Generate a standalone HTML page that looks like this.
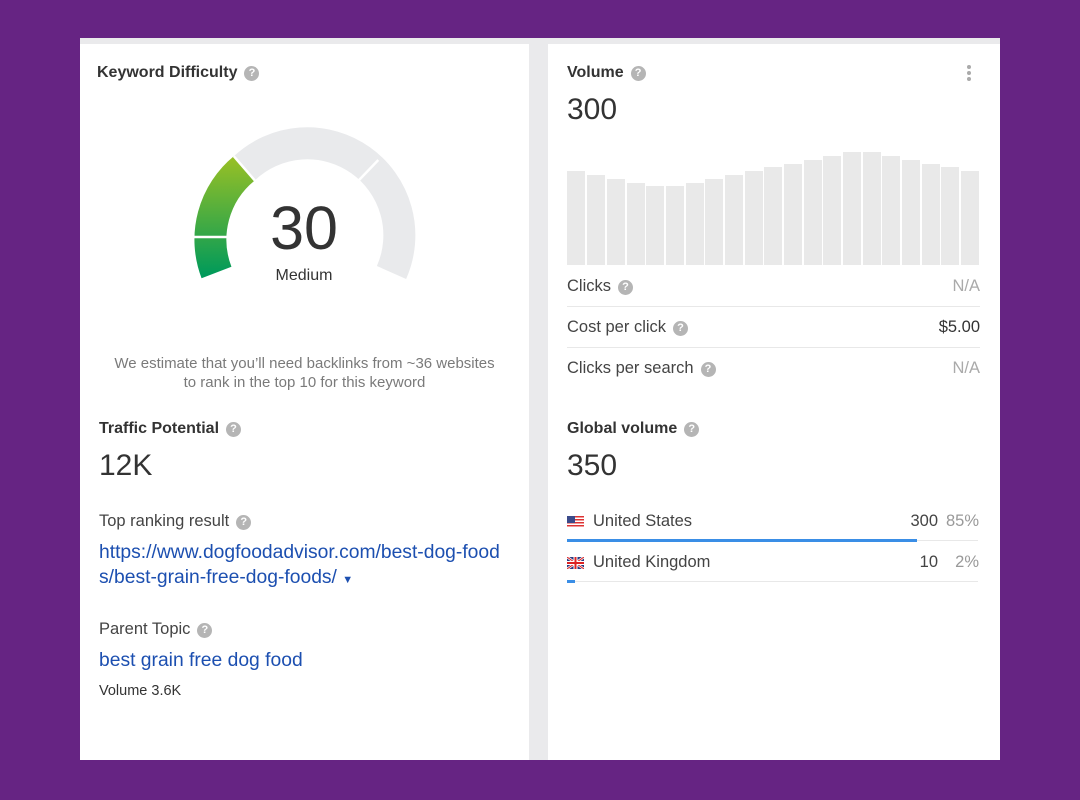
<!DOCTYPE html>
<html><head><meta charset="utf-8"><style>
*{margin:0;padding:0;box-sizing:border-box}
body{width:1080px;height:800px;background:#662483;position:relative;overflow:hidden;font-family:"Liberation Sans",Arial,sans-serif;color:#333}
.a{position:absolute;white-space:nowrap}
.q{display:inline-block;width:15px;height:15px;border-radius:50%;background:#b5b5b5;color:#fff;font-size:11px;font-weight:bold;text-align:center;line-height:15px;vertical-align:1px;margin-left:7px}
.h{font-weight:bold;font-size:16px;line-height:20px;color:#333}
.l{font-size:16.5px;line-height:20px;color:#444}
.big{font-size:30px;line-height:34px;color:#333}
.link{color:#1c4fb0;font-size:19.3px;line-height:25px}
.hr{position:absolute;height:1px;background:#e8e8e8}
</style></head><body>
<div class="a" style="left:80px;top:38px;width:920px;height:722px;background:#eaeaec"></div>
<div class="a" style="left:80px;top:44px;width:449px;height:716px;background:#fff"></div>
<div class="a" style="left:548px;top:44px;width:452px;height:716px;background:#fff"></div>

<div class="a h" style="left:97px;top:63px">Keyword Difficulty<span class="q">?</span></div>
<svg class="a" style="left:0;top:0" width="540" height="320">
<defs><linearGradient id="g" x1="0" y1="160" x2="0" y2="275" gradientUnits="userSpaceOnUse"><stop offset="0" stop-color="#95bf26"/><stop offset="1" stop-color="#009a5a"/></linearGradient></defs>
<path d="M216.5 272.5 A92 92 0 0 1 244.3 168.3" fill="none" stroke="url(#g)" stroke-width="32"/>
<path d="M244.3 168.3 A92 92 0 0 1 391.5 272.5" fill="none" stroke="#e9eaec" stroke-width="32"/>
<g stroke="#fff" stroke-width="2.5">
<line x1="228" y1="237" x2="194" y2="237"/>
<line x1="254.8" y1="180.4" x2="233.8" y2="156.2"/>
<line x1="356.1" y1="183.1" x2="378.3" y2="160"/>
</g>
<text x="304" y="249" text-anchor="middle" font-family="Liberation Sans" font-size="61" fill="#333">30</text>
<text x="304" y="280" text-anchor="middle" font-family="Liberation Sans" font-size="16" fill="#333">Medium</text>
</svg>
<div class="a" style="left:80px;top:354px;width:449px;text-align:center;font-size:15px;line-height:19px;color:#7a7a7a">We estimate that you’ll need backlinks from ~36 websites<br>to rank in the top 10 for this keyword</div>

<div class="a h" style="left:99px;top:419px">Traffic Potential<span class="q">?</span></div>
<div class="a big" style="left:99px;top:449px">12K</div>
<div class="a l" style="left:99px;top:511px">Top ranking result<span class="q">?</span></div>
<div class="a link" style="left:99px;top:540px">https://www.dogfoodadvisor.com/best-dog-food<br>s/best-grain-free-dog-foods/ <span style="font-size:11px">▼</span></div>
<div class="a l" style="left:99px;top:619px">Parent Topic<span class="q">?</span></div>
<div class="a link" style="left:99px;top:648px">best grain free dog food</div>
<div class="a" style="left:99px;top:682px;font-size:14.5px;line-height:18px;color:#333">Volume 3.6K</div>

<div class="a h" style="left:567px;top:63px">Volume<span class="q">?</span></div>
<div class="a" style="left:967px;top:65px;width:4px">
<div style="width:4px;height:4px;border-radius:50%;background:#aaa;margin-bottom:2px"></div>
<div style="width:4px;height:4px;border-radius:50%;background:#aaa;margin-bottom:2px"></div>
<div style="width:4px;height:4px;border-radius:50%;background:#aaa"></div></div>
<div class="a big" style="left:567px;top:93px">300</div>
<svg class="a" style="left:0;top:0" width="1000" height="280">
<g fill="#e9e9e9">
<rect x="567" y="171" width="18" height="94"/><rect x="587" y="175" width="18" height="90"/><rect x="607" y="179" width="18" height="86"/><rect x="627" y="183" width="18" height="82"/><rect x="646" y="186" width="18" height="79"/><rect x="666" y="186" width="18" height="79"/><rect x="686" y="183" width="18" height="82"/><rect x="705" y="179" width="18" height="86"/><rect x="725" y="175" width="18" height="90"/><rect x="745" y="171" width="18" height="94"/><rect x="764" y="167" width="18" height="98"/><rect x="784" y="164" width="18" height="101"/><rect x="804" y="160" width="18" height="105"/><rect x="823" y="156" width="18" height="109"/><rect x="843" y="152" width="18" height="113"/><rect x="863" y="152" width="18" height="113"/><rect x="882" y="156" width="18" height="109"/><rect x="902" y="160" width="18" height="105"/><rect x="922" y="164" width="18" height="101"/><rect x="941" y="167" width="18" height="98"/><rect x="961" y="171" width="18" height="94"/>
</g></svg>

<div class="a l" style="left:567px;top:276px">Clicks<span class="q">?</span></div>
<div class="a l" style="left:900px;top:276px;width:80px;text-align:right;color:#aaa">N/A</div>
<div class="hr" style="left:567px;top:306px;width:413px"></div>
<div class="a l" style="left:567px;top:317px">Cost per click<span class="q">?</span></div>
<div class="a l" style="left:900px;top:317px;width:80px;text-align:right;color:#333">$5.00</div>
<div class="hr" style="left:567px;top:347px;width:413px"></div>
<div class="a l" style="left:567px;top:358px">Clicks per search<span class="q">?</span></div>
<div class="a l" style="left:900px;top:358px;width:80px;text-align:right;color:#aaa">N/A</div>

<div class="a h" style="left:567px;top:419px">Global volume<span class="q">?</span></div>
<div class="a big" style="left:567px;top:449px">350</div>

<svg class="a" style="left:567px;top:516px" width="17" height="12"><rect width="17" height="12" fill="#fff"/><g fill="#d33"><rect y="0" width="17" height="1.5"/><rect y="3" width="17" height="1.5"/><rect y="6" width="17" height="1.5"/><rect y="9" width="17" height="1.5"/></g><rect width="8" height="7" fill="#3b4a8a"/></svg>
<div class="a l" style="left:593px;top:511px">United States</div>
<div class="a l" style="left:880px;top:511px;width:58px;text-align:right">300</div>
<div class="a l" style="left:940px;top:511px;width:39px;text-align:right;color:#999">85%</div>
<div class="hr" style="left:567px;top:540px;width:411px"></div>
<div class="a" style="left:567px;top:539px;width:350px;height:3px;background:#3a8ee6"></div>

<svg class="a" style="left:567px;top:557px" width="17" height="12"><rect width="17" height="12" fill="#2b3a80"/><path d="M0 0L17 12M17 0L0 12" stroke="#fff" stroke-width="2.5"/><path d="M0 0L17 12M17 0L0 12" stroke="#d22" stroke-width="1"/><path d="M8.5 0V12M0 6H17" stroke="#fff" stroke-width="4"/><path d="M8.5 0V12M0 6H17" stroke="#d22" stroke-width="2"/></svg>
<div class="a l" style="left:593px;top:552px">United Kingdom</div>
<div class="a l" style="left:880px;top:552px;width:58px;text-align:right">10</div>
<div class="a l" style="left:940px;top:552px;width:39px;text-align:right;color:#999">2%</div>
<div class="hr" style="left:567px;top:581px;width:411px"></div>
<div class="a" style="left:567px;top:580px;width:8px;height:3px;background:#3a8ee6"></div>
</body></html>
